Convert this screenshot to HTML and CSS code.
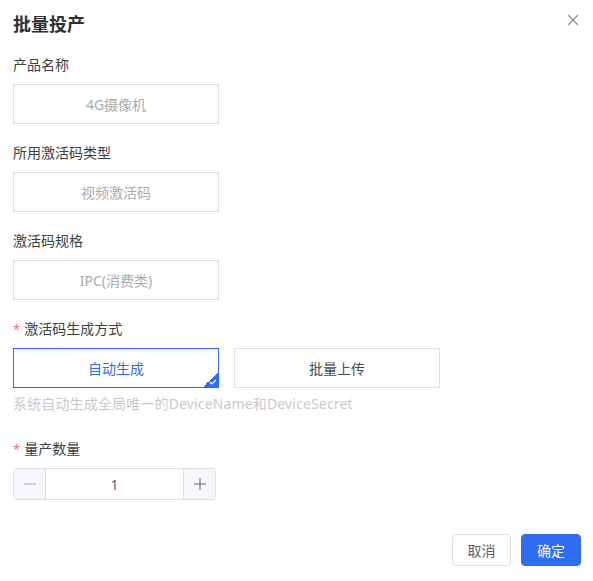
FILE: index.html
```html
<!DOCTYPE html>
<html lang="zh">
<head>
<meta charset="utf-8">
<link rel="stylesheet" href="styles.css">
</head>
<body>
<div class="dialog">
  <div class="header">
    <h1 class="title">批量投产</h1>
    <button class="close" aria-label="关闭">
      <svg width="12" height="12" viewBox="0 0 12 12"><path d="M1 1L11 11M11 1L1 11" stroke="#8a8d94" stroke-width="1.2" fill="none"/></svg>
    </button>
  </div>
  <div class="form">
    <div class="item">
      <div class="label">产品名称</div>
      <div class="box">4G摄像机</div>
    </div>
    <div class="item">
      <div class="label">所用激活码类型</div>
      <div class="box">视频激活码</div>
    </div>
    <div class="item">
      <div class="label">激活码规格</div>
      <div class="box">IPC(消费类)</div>
    </div>
    <div class="item">
      <div class="label"><span class="req">*</span>激活码生成方式</div>
      <div class="cards">
        <div class="card active">自动生成
          <span class="corner"><svg width="8" height="6" viewBox="0 0 8 6"><path d="M1 3L3 5L7 1" stroke="#fff" stroke-width="1.2" fill="none"/></svg></span>
        </div>
        <div class="card">批量上传</div>
      </div>
      <div class="help">系统自动生成全局唯一的DeviceName和DeviceSecret</div>
    </div>
    <div class="item qty">
      <div class="label"><span class="req">*</span>量产数量</div>
      <div class="number">
        <span class="step">
          <svg width="12" height="12" viewBox="0 0 12 12"><path d="M0 6H12" stroke="#a8abb2" stroke-width="1"/></svg>
        </span>
        <span class="value">1</span>
        <span class="step plus">
          <svg width="12" height="12" viewBox="0 0 12 12"><path d="M0 6H12M6 0V12" stroke="#606266" stroke-width="1"/></svg>
        </span>
      </div>
    </div>
  </div>
  <div class="footer">
    <button class="btn">取消</button>
    <button class="btn primary">确定</button>
  </div>
</div>
</body>
</html>
```
FILE: styles.css
```css
* { box-sizing: border-box; }
html, body { margin: 0; padding: 0; background: #fff; }
body {
  font-family: "Noto Sans", "Noto Sans CJK SC", sans-serif;
  color: #303133;
  width: 593px;
  height: 581px;
}
.dialog { padding: 12px 12px 0 13px; }
.header { display: flex; justify-content: space-between; align-items: flex-start; height: 24px; }
.title { margin: 0; font-size: 18px; line-height: 24px; font-weight: 700; color: #303133; }
.close { border: 0; background: none; padding: 0; margin: 2px 2px 0 0; width: 12px; height: 12px; display: flex; }
.form { margin-top: 18px; }
.item { margin-bottom: 18px; }
.label { font-size: 14px; line-height: 22px; color: #3c3e42; margin-bottom: 8px; }
.req { color: #f56c6c; margin-right: 4px; font-size: 13px; }
.box {
  width: 206px; height: 40px;
  border: 1px solid #dcdfe6;
  display: flex; align-items: center; justify-content: center;
  font-size: 14px; color: #a8abb2;
}
.cards { display: flex; gap: 15px; }
.card {
  position: relative;
  width: 206px; height: 40px;
  border: 1px solid #dcdfe6;
  display: flex; align-items: center; justify-content: center;
  font-size: 14px; color: #4a4c50;
}
.card.active { border-color: #2f6cf6; color: #2f6cf6; }
.corner {
  position: absolute; right: 0; bottom: 0;
  width: 15px; height: 15px;
  background: linear-gradient(135deg, transparent 50%, #2f6cf6 50%);
  display: flex; align-items: flex-end; justify-content: flex-end;
  padding: 0 1px 2px 0;
}
.help { margin-top: 6px; font-size: 14px; line-height: 20px; color: #c8cace; letter-spacing: 0.15px; }
.item.qty { margin-top: 24px; }
.number {
  display: flex; width: 203px; height: 32px;
  border: 1px solid #dcdfe6; border-radius: 4px; overflow: hidden;
}
.step {
  width: 32px; background: #f5f7fa;
  display: flex; align-items: center; justify-content: center;
  border-right: 1px solid #dcdfe6;
}
.step.plus { border-right: 0; border-left: 1px solid #dcdfe6; }
.value { flex: 1; display: flex; align-items: center; justify-content: center; font-size: 14px; color: #606266; }
.footer { display: flex; justify-content: flex-end; gap: 10px; margin-top: 34px; }
.btn {
  font-family: inherit; font-size: 14px;
  height: 32px; width: 59px; padding: 0;
  border: 1px solid #dcdfe6; border-radius: 4px;
  background: #fff; color: #606266;
}
.btn.primary { width: 60px; background: #2f6cf6; border-color: #2f6cf6; color: #fff; }
```
